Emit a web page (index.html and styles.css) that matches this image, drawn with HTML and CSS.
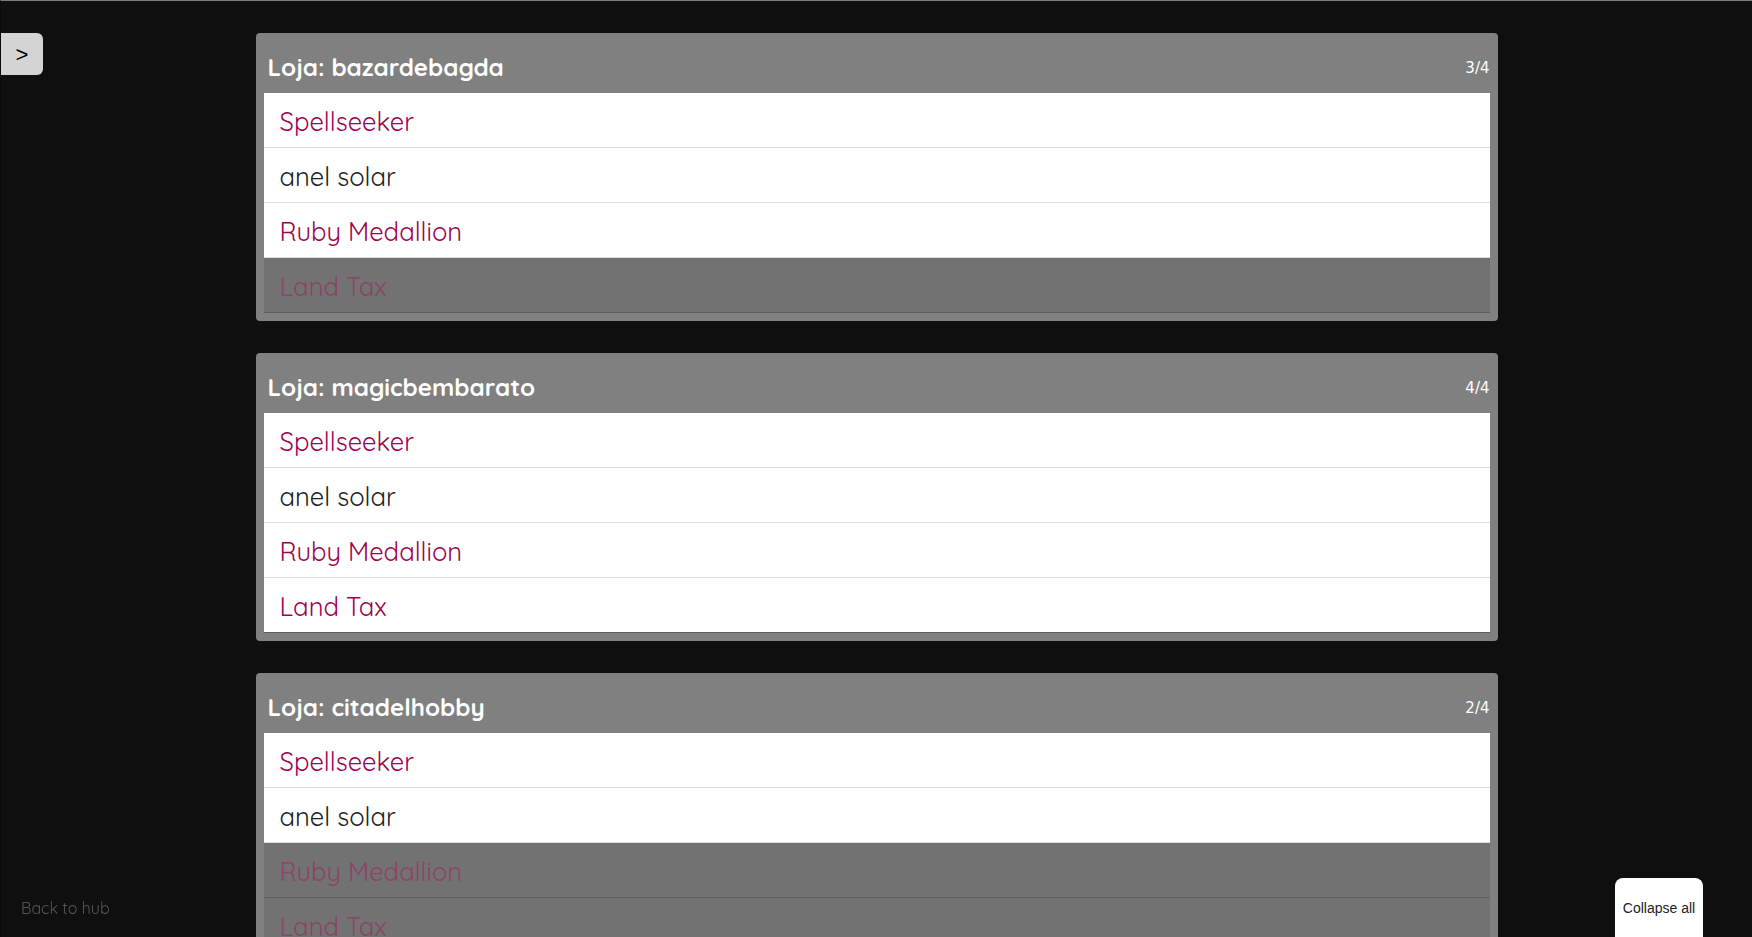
FILE: index.html
```html
<!DOCTYPE html>
<html lang="pt">
<head>
  <meta charset="UTF-8" />
  <title>Lojas</title>
  <link rel="stylesheet" href="styles.css">
</head>
<body>
  <button class="side-toggle">&gt;</button>
  <a class="back-link" href="#">Back to hub</a>

  <div class="stores">
    <div class="store">
      <div class="store-head">
        <h2>Loja: bazardebagda</h2>
        <span class="count">3/4</span>
      </div>
      <ul class="cards">
        <li class="card red">Spellseeker</li>
        <li class="card">anel solar</li>
        <li class="card red">Ruby Medallion</li>
        <li class="card red missing">Land Tax</li>
      </ul>
    </div>

    <div class="store">
      <div class="store-head">
        <h2>Loja: magicbembarato</h2>
        <span class="count">4/4</span>
      </div>
      <ul class="cards">
        <li class="card red">Spellseeker</li>
        <li class="card">anel solar</li>
        <li class="card red">Ruby Medallion</li>
        <li class="card red">Land Tax</li>
      </ul>
    </div>

    <div class="store">
      <div class="store-head">
        <h2>Loja: citadelhobby</h2>
        <span class="count">2/4</span>
      </div>
      <ul class="cards">
        <li class="card red">Spellseeker</li>
        <li class="card">anel solar</li>
        <li class="card red missing">Ruby Medallion</li>
        <li class="card red missing">Land Tax</li>
      </ul>
    </div>
  </div>

  <button class="collapse-all">Collapse all</button>
</body>
</html>
```

FILE: styles.css
```css
body { margin: 0; background: #0f0f0f; border-top: 1px solid #7a7a7a; border-left: 1px solid #0a0a0a; font-family: "Quicksand", "Lato", sans-serif; }

.side-toggle { position: fixed; left: 1px; top: 33px; width: 42px; height: 42px; border: 0; border-radius: 0 6px 6px 0; background: #d4d4d4; color: #000; font-family: "Liberation Sans", sans-serif; font-size: 22px; padding: 2px 0 0; }
.back-link { position: fixed; left: 21px; top: 898px; color: #555; font-size: 16px; text-decoration: none; }
.collapse-all { position: fixed; left: 1615px; top: 878px; width: 88px; height: 60px; border: 0; border-radius: 8px 8px 0 0; background: #fff; color: #222; font-family: "Liberation Sans", sans-serif; font-size: 14px; padding: 0; }

.stores { width: 1242px; margin: 0 auto; padding-top: 32px; display: flex; flex-direction: column; gap: 32px; }
.store { background: #808080; border-radius: 4px; padding: 0 8px 8px; }
.store-head { display: flex; justify-content: space-between; align-items: center; height: 60px; padding: 8px 0 0 4px; box-sizing: border-box; }
.store-head h2 { margin: 0; color: #fff; font-size: 24.2px; font-weight: 700; }
.count { color: #fff; font-family: "DejaVu Sans", sans-serif; font-size: 15px; padding-top: 2px; }

.cards { list-style: none; margin: 0; padding: 0; }
.card { height: 54px; line-height: 56px; padding-left: 16px; background: #fff; border-bottom: 1px solid #dcdcdc; color: #222; font-size: 25.6px; }
.card:last-child { border-bottom-color: #5c5c5c; }
.red { color: #a0034f; }
.missing { background: #727272; color: #8c4468; border-bottom-color: #5c5c5c; }
```
